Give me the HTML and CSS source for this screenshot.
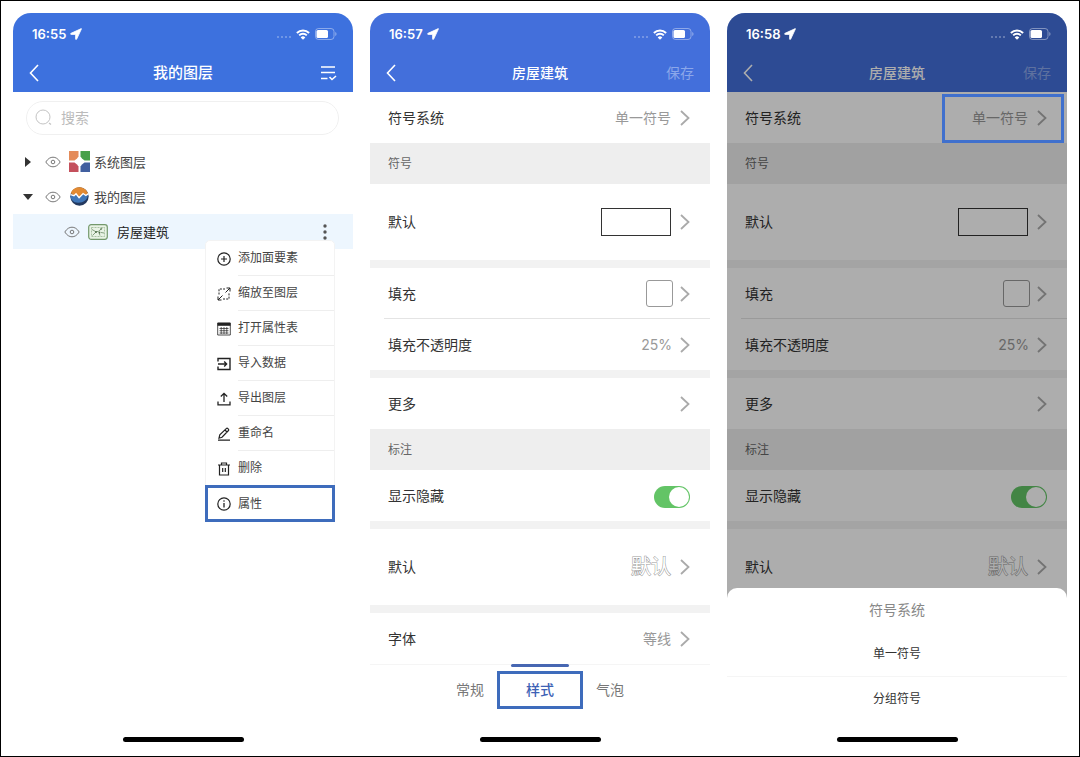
FILE: index.html
```
<!DOCTYPE html>
<html lang="zh-CN">
<head>
    <meta charset="UTF-8">
    <meta name="viewport" content="width=device-width, initial-scale=1.0">
    <title>我的图层</title>
    <link rel="stylesheet" href="styles.css">
</head>
<body>
    <!-- Icons -->
    <svg class="sprite" aria-hidden="true">
        <symbol id="location" viewBox="0 0 12 12"><path d="M11.300.6 1 5.300c-.6.3-.5 1.100.2 1.100h4.400v4.500c0 .7.800.8 1.100.2L11.500.8z" fill="currentColor" stroke="currentColor" stroke-width=".8" stroke-linejoin="round"/></symbol>
        <symbol id="signal" viewBox="0 0 16 4"><g fill="currentColor" opacity=".35"><circle cx="2" cy="2" r="1"/><circle cx="6" cy="2" r="1"/><circle cx="10" cy="2" r="1"/><circle cx="14" cy="2" r="1"/></g></symbol>
        <symbol id="wifi" viewBox="0 0 14 11"><path d="M.9 4a8.700 8.700 0 0 1 12.200 0M3.200 6.400a5.400 5.400 0 0 1 7.600 0" fill="none" stroke="currentColor" stroke-width="2"/><path d="M7 10.800 4.700 8.400a3.300 3.300 0 0 1 4.600 0z" fill="currentColor"/></symbol>
        <symbol id="battery" viewBox="0 0 22 12"><rect x=".5" y=".5" width="18.500" height="11" rx="3" fill="none" stroke="currentColor" opacity=".4"/><rect x="1.500" y="2" width="11.500" height="8" rx="1.500" fill="currentColor"/><path d="M20.300 4v4c1.600-.7 1.600-3.300 0-4z" fill="currentColor" opacity=".45"/></symbol>
        <symbol id="back" viewBox="0 0 10 18"><path d="M9 1 1.500 9 9 17" fill="none" stroke="currentColor" stroke-width="1.600"/></symbol>
        <symbol id="next" viewBox="0 0 10 16"><path d="m1 1 7.500 7L1 15" fill="none" stroke="currentColor" stroke-width="1.800"/></symbol>
        <symbol id="list" viewBox="0 0 17 16"><path d="M1 2h14M1 7.500h14M1 13.500h6.500M9.500 12l2.500 2.500L16 11" fill="none" stroke="currentColor" stroke-width="1.600"/></symbol>
        <symbol id="search" viewBox="0 0 18 18"><circle cx="8" cy="8" r="7" fill="none" stroke="currentColor"/><path d="m14 14 2 1.500" fill="none" stroke="currentColor" stroke-width="1.300"/></symbol>
        <symbol id="eye" viewBox="0 0 16 12"><g fill="none" stroke="currentColor"><path d="M.8 6C3 2.500 5.500 1.200 8 1.200S13 2.500 15.200 6C13 9.500 10.500 10.800 8 10.800S3 9.500.8 6z"/><circle cx="8" cy="6" r="1.800"/></g></symbol>
        <symbol id="system" viewBox="0 0 21 21"><path d="M0 0h9.500v5.500L8 7.500 5.500 9.500H0z" fill="#e48b5a"/><path d="M11.500 0H21v9.500h-5.500L13 7.500l-1.500-2z" fill="#48a04b"/><path d="M0 11.500h5.500L8 13.500l1.500 2V21H0z" fill="#c4505c"/><path d="M15.500 11.500H21V21h-9.500v-5.500l1.500-2z" fill="#415f9f"/></symbol>
        <symbol id="mine" viewBox="0 0 18 18"><circle cx="9" cy="9" r="8.700" fill="#23395f"/><path d="M.3 8.500 4 7l1.700-.8 3 3.800 3.700-3.500L15 8l2-.5c-.3 5-5.500 8.500-12.500 7C2 13 .3 11 .3 8.500z" fill="#3f76b8"/><path d="M.8 6C2.200 2 5.300.3 9 .3s6.700 2.300 8.200 6L15 8l-2.600-1.800-3.800 4L5.700 6.500 3.800 8z" fill="#e28a32"/><path d="m.6 7.300 3.200 1 1.900-1.800 2.900 3.700 3.800-4L15 8l2.500-1.700" fill="none" stroke="#fff" stroke-width="1.300"/></symbol>
        <symbol id="polygon" viewBox="0 0 20 16"><rect x=".7" y=".7" width="18.600" height="14.600" rx="2.500" fill="#e9f3e5" stroke="#74996c" stroke-width="1.200"/><path d="M3.500 3.500h13v9h-13z" fill="none" stroke="#8fae88" stroke-width=".7" stroke-dasharray="2 1"/><path d="m4 5.500 4 2.300 2.500-.5L14.500 4M8 8l-3.500 3.500M11 8.500l1 3M13 8.500l3 .5" fill="none" stroke="#6b8a65" stroke-width=".8"/><g fill="#4c6b47"><circle cx="8" cy="8" r=".9"/><circle cx="11.500" cy="8.500" r=".9"/><circle cx="13" cy="5" r=".8"/></g></symbol>
        <symbol id="more" viewBox="0 0 4 16"><g fill="currentColor"><circle cx="2" cy="2" r="1.700"/><circle cx="2" cy="8" r="1.700"/><circle cx="2" cy="14" r="1.700"/></g></symbol>
        <symbol id="add" viewBox="0 0 14 14"><g fill="none" stroke="currentColor" stroke-width="1.200"><circle cx="7" cy="7" r="6.200"/><path d="M7 4v6M4 7h6"/></g></symbol>
        <symbol id="extent" viewBox="0 0 14 14"><g fill="none" stroke="currentColor"><path d="M1 13 5.500 8.500M8.500 5.500 13 1M9.500 1H13v3.500M1 9.500V13h3.500"/><path d="M2 7.500V2h6M6 12h6V6" stroke-dasharray="2 1.200"/></g></symbol>
        <symbol id="table" viewBox="0 0 14 14"><path d="M.7 1h12.600v12H.7z" fill="none" stroke="currentColor" stroke-width=".8"/><path d="M.5.8h13v3H.5z" fill="currentColor"/><path d="M2.500 6.500h9M2.500 8.700h9M2.500 11h9M4.200 5v7M7 5v7M9.800 5v7" fill="none" stroke="currentColor" stroke-width=".7"/></symbol>
        <symbol id="import" viewBox="0 0 14 14"><path d="M1 4.500V1.500h12v11H1v-3M1 7h8.500M7.200 4.600 9.600 7 7.200 9.400" fill="none" stroke="currentColor" stroke-width="1.400"/></symbol>
        <symbol id="export" viewBox="0 0 14 14"><path d="M1 9.500v3.300h12V9.500M7 10V1.500M3.800 4.500 7 1.300l3.200 3.200" fill="none" stroke="currentColor" stroke-width="1.300"/></symbol>
        <symbol id="rename" viewBox="0 0 14 14"><path d="m2 11.200.8-3.400L9.500 1.400c.8-.7 2.900 1.200 2 2.100L5 10.200zM8 3l2 2M1 13.200h12" fill="none" stroke="currentColor" stroke-width="1.200"/></symbol>
        <symbol id="delete" viewBox="0 0 14 14"><path d="M1 3h12M4.500 3V1h5v2M2.500 3v10h9V3M5.700 6v4M8.300 6v4" fill="none" stroke="currentColor" stroke-width="1.200"/></symbol>
        <symbol id="info" viewBox="0 0 14 14"><circle cx="7" cy="7" r="6.200" fill="none" stroke="currentColor" stroke-width="1.200"/><path d="M7 6v4.500" stroke="currentColor" stroke-width="1.300"/><circle cx="7" cy="4" r=".8" fill="currentColor"/></symbol>
    </svg>

    <div class="screens">
        <!-- Layer list -->
        <section class="phone">
            <header class="header header-list">
                <div class="status">
                    <span class="time">16:55</span>
                    <svg class="icon-location"><use href="#location"/></svg>
                    <svg class="icon-signal"><use href="#signal"/></svg>
                    <svg class="icon-wifi"><use href="#wifi"/></svg>
                    <svg class="icon-battery"><use href="#battery"/></svg>
                </div>
                <div class="nav">
                    <button class="nav-left" aria-label="返回"><svg class="icon-back"><use href="#back"/></svg></button>
                    <h1 class="title title-list">我的图层</h1>
                    <button class="nav-right" aria-label="列表"><svg class="icon-list"><use href="#list"/></svg></button>
                </div>
            </header>

            <div class="search">
                <svg class="icon-search"><use href="#search"/></svg>
                <input type="search" class="search-input" placeholder="搜索" aria-label="搜索">
            </div>

            <ul class="tree">
                <li class="layer">
                    <button class="arrow" aria-label="展开"></button>
                    <button class="visible" aria-label="可见"><svg class="icon-eye"><use href="#eye"/></svg></button>
                    <svg class="icon-group"><use href="#system"/></svg>
                    <span>系统图层</span>
                </li>
                <li class="layer">
                    <button class="arrow open" aria-label="收起"></button>
                    <button class="visible" aria-label="可见"><svg class="icon-eye"><use href="#eye"/></svg></button>
                    <svg class="icon-group icon-mine"><use href="#mine"/></svg>
                    <span>我的图层</span>
                </li>
                <li class="layer layer-child">
                    <button class="visible" aria-label="可见"><svg class="icon-eye"><use href="#eye"/></svg></button>
                    <svg class="icon-polygon"><use href="#polygon"/></svg>
                    <span>房屋建筑</span>
                    <button class="more" aria-label="更多"><svg class="icon-more"><use href="#more"/></svg></button>
                    <div class="menu">
                        <button class="menu-item"><svg class="icon-menu"><use href="#add"/></svg><span>添加面要素</span></button>
                        <button class="menu-item"><svg class="icon-menu"><use href="#extent"/></svg><span>缩放至图层</span></button>
                        <button class="menu-item"><svg class="icon-menu"><use href="#table"/></svg><span>打开属性表</span></button>
                        <button class="menu-item"><svg class="icon-menu"><use href="#import"/></svg><span>导入数据</span></button>
                        <button class="menu-item"><svg class="icon-menu"><use href="#export"/></svg><span>导出图层</span></button>
                        <button class="menu-item"><svg class="icon-menu"><use href="#rename"/></svg><span>重命名</span></button>
                        <button class="menu-item"><svg class="icon-menu"><use href="#delete"/></svg><span>删除</span></button>
                        <button class="menu-item marked"><svg class="icon-menu"><use href="#info"/></svg><span>属性</span></button>
                    </div>
                </li>
            </ul>
            <div class="home"></div>
        </section>

        <!-- Style settings -->
        <section class="phone">
            <header class="header">
                <div class="status">
                    <span class="time">16:57</span>
                    <svg class="icon-location"><use href="#location"/></svg>
                    <svg class="icon-signal"><use href="#signal"/></svg>
                    <svg class="icon-wifi"><use href="#wifi"/></svg>
                    <svg class="icon-battery"><use href="#battery"/></svg>
                </div>
                <div class="nav">
                    <button class="nav-left" aria-label="返回"><svg class="icon-back"><use href="#back"/></svg></button>
                    <h1 class="title">房屋建筑</h1>
                    <button class="nav-right save">保存</button>
                </div>
            </header>

            <button class="row"><span>符号系统</span><span class="value">单一符号</span><svg class="icon-next"><use href="#next"/></svg></button>
            <h2 class="group">符号</h2>
            <button class="row row-tall"><span>默认</span><span class="value symbol"></span><svg class="icon-next"><use href="#next"/></svg></button>
            <div class="band"></div>
            <button class="row row-line"><span>填充</span><span class="value swatch"></span><svg class="icon-next"><use href="#next"/></svg></button>
            <button class="row"><span>填充不透明度</span><span class="value number">25%</span><svg class="icon-next"><use href="#next"/></svg></button>
            <div class="band"></div>
            <button class="row"><span>更多</span><svg class="icon-next"><use href="#next"/></svg></button>
            <h2 class="group">标注</h2>
            <div class="row">
                <label for="show1">显示隐藏</label>
                <input type="checkbox" id="show1" class="switch" checked>
            </div>
            <div class="band"></div>
            <button class="row row-tall"><span>默认</span><span class="value sample">默认</span><svg class="icon-next"><use href="#next"/></svg></button>
            <div class="band"></div>
            <button class="row"><span>字体</span><span class="value">等线</span><svg class="icon-next"><use href="#next"/></svg></button>

            <nav class="tabs">
                <button class="tab">常规</button>
                <button class="tab active">样式</button>
                <button class="tab">气泡</button>
            </nav>
            <div class="home"></div>
        </section>

        <!-- Symbol system picker -->
        <section class="phone">
            <header class="header">
                <div class="status">
                    <span class="time">16:58</span>
                    <svg class="icon-location"><use href="#location"/></svg>
                    <svg class="icon-signal"><use href="#signal"/></svg>
                    <svg class="icon-wifi"><use href="#wifi"/></svg>
                    <svg class="icon-battery"><use href="#battery"/></svg>
                </div>
                <div class="nav">
                    <button class="nav-left" aria-label="返回"><svg class="icon-back"><use href="#back"/></svg></button>
                    <h1 class="title">房屋建筑</h1>
                    <button class="nav-right save">保存</button>
                </div>
            </header>

            <button class="row row-picked"><span>符号系统</span><span class="value">单一符号</span><svg class="icon-next"><use href="#next"/></svg></button>
            <h2 class="group">符号</h2>
            <button class="row row-tall"><span>默认</span><span class="value symbol"></span><svg class="icon-next"><use href="#next"/></svg></button>
            <div class="band"></div>
            <button class="row row-line"><span>填充</span><span class="value swatch"></span><svg class="icon-next"><use href="#next"/></svg></button>
            <button class="row"><span>填充不透明度</span><span class="value number">25%</span><svg class="icon-next"><use href="#next"/></svg></button>
            <div class="band"></div>
            <button class="row"><span>更多</span><svg class="icon-next"><use href="#next"/></svg></button>
            <h2 class="group">标注</h2>
            <div class="row">
                <label for="show2">显示隐藏</label>
                <input type="checkbox" id="show2" class="switch" checked>
            </div>
            <div class="band"></div>
            <button class="row row-tall"><span>默认</span><span class="value sample">默认</span><svg class="icon-next"><use href="#next"/></svg></button>

            <div class="mask"></div>
            <div class="sheet">
                <h2 class="sheet-title">符号系统</h2>
                <button class="option">单一符号</button>
                <button class="option">分组符号</button>
                <div class="home"></div>
            </div>
        </section>
    </div>
</body>
</html>
```
FILE: styles.css
```
*,
*::before,
*::after {
    box-sizing: border-box;
}

body {
    margin: 0;
    min-height: 100vh;
    display: flex;
    border: 1px solid #000;
    background-color: #fff;
    font-family: Inter, "Noto Sans CJK SC", sans-serif;
    font-size: 14px;
    line-height: 20px;
    color: #333;
}

button {
    padding: 0;
    border: none;
    background: none;
    font: inherit;
    color: inherit;
    cursor: pointer;
}

svg {
    display: block;
    flex: none;
}

.sprite {
    position: absolute;
    width: 0;
    height: 0;
}

.screens {
    flex: 1;
    display: grid;
    grid-template-columns: repeat(3, 1fr);
    gap: 17px;
    padding: 12px;
}

.phone {
    position: relative;
    display: flex;
    flex-direction: column;
    border-radius: 18px 18px 0 0;
    overflow: hidden;
}

/* Header */
.header {
    background-color: #436fdb;
    color: #fff;
}

.header-list {
    background-color: #3d71de;
}

.status {
    position: relative;
    z-index: 2;
    display: flex;
    align-items: center;
    height: 42px;
    padding: 0 16px 0 19px;
}

.time {
    font-size: 13px;
    font-weight: 600;
}

.icon-location {
    width: 12px;
    height: 12px;
    margin-left: 4px;
}

.icon-signal {
    width: 16px;
    height: 4px;
    margin: 6px 4px 0 auto;
}

.icon-wifi {
    width: 14px;
    height: 11px;
    margin-right: 5px;
}

.icon-battery {
    width: 22px;
    height: 12px;
}

.nav {
    display: grid;
    grid-template-columns: 1fr auto 1fr;
    align-items: center;
    height: 37px;
    padding: 0 16px 2px;
}

.nav-left {
    justify-self: start;
}

.nav-right {
    justify-self: end;
}

.icon-back {
    width: 10px;
    height: 18px;
}

.icon-list {
    width: 17px;
    height: 16px;
}

.title {
    margin: 0;
    font-size: 14px;
    font-weight: 500;
}

.title-list {
    font-size: 15px;
}

.save {
    color: #8ba7ea;
}

/* Layers */
.search {
    display: flex;
    align-items: center;
    gap: 8px;
    height: 34px;
    margin: 9px 14px 9px 13px;
    padding: 0 8px;
    border: 1px solid #f0f0f0;
    border-radius: 17px;
    color: #c4c4c4;
}

.icon-search {
    width: 18px;
    height: 18px;
}

.search-input {
    flex: 1;
    min-width: 0;
    padding: 0;
    border: none;
    outline: none;
    background: none;
    font: inherit;
}

.search-input::placeholder {
    color: #bbb;
}

.tree {
    margin: 0;
    padding: 0;
    list-style: none;
}

.layer {
    position: relative;
    display: flex;
    align-items: center;
    height: 35px;
    padding-left: 9px;
    font-size: 13px;
    color: #444;
}

.layer-child {
    padding: 0 26px 0 51px;
    background-color: #edf6fe;
    color: #222;
}

.arrow {
    display: flex;
    justify-content: center;
    width: 12px;
    margin-right: 11px;
}

.arrow::before {
    content: "";
    border-left: 6px solid #333;
    border-top: 5px solid transparent;
    border-bottom: 5px solid transparent;
}

.arrow.open::before {
    border-top: 6px solid #333;
    border-left: 5px solid transparent;
    border-right: 5px solid transparent;
    border-bottom: 0;
}

.icon-eye {
    width: 16px;
    height: 12px;
    color: #777;
}

.icon-group {
    width: 21px;
    height: 21px;
    margin: 0 4px 0 8px;
}

.icon-mine {
    padding: 1px;
}

.icon-polygon {
    width: 20px;
    height: 16px;
    margin: 0 9px 0 8px;
}

.more {
    margin-left: auto;
    color: #555;
}

.icon-more {
    width: 4px;
    height: 16px;
}

.menu {
    position: absolute;
    z-index: 1;
    top: 26px;
    right: 18px;
    width: 130px;
    border: 1px solid #f3f3f3;
    border-radius: 5px 5px 0 0;
    background-color: #fff;
}

.menu-item {
    display: flex;
    align-items: center;
    gap: 7px;
    width: 100%;
    height: 35px;
    padding-left: 11px;
    font-size: 12px;
    color: #444;
}

.menu-item span {
    flex: 1;
    line-height: 34px;
    border-bottom: 1px solid #eee;
    text-align: left;
}

.icon-menu {
    width: 14px;
    height: 14px;
    color: #222;
}

.menu-item.marked {
    position: relative;
    width: 130px;
    height: 37px;
    margin: -1px;
    padding-left: 9px;
    border: 3px solid #3e6cbc;
}

.menu-item.marked span {
    line-height: 30px;
    border: none;
}

/* Settings */
.row {
    display: flex;
    align-items: center;
    height: 51px;
    padding: 0 20px 0 18px;
    text-align: left;
}

.row-tall {
    height: 76px;
}

.row-line {
    background: linear-gradient(#e4e4e4, #e4e4e4) 14px 100% / 100% 1px no-repeat;
}

.value {
    margin-left: auto;
    margin-right: 9px;
    color: #999;
}

.number {
    margin-right: 8px;
}

.symbol {
    width: 70px;
    height: 28px;
    border: 1px solid #333;
}

.swatch {
    width: 27px;
    height: 27px;
    margin-right: 7px;
    border: 1px solid #999;
    border-radius: 3px;
}

.sample {
    font-size: 20px;
    color: #fff;
    -webkit-text-stroke: 1px #999;
    paint-order: stroke fill;
}

.icon-next {
    width: 10px;
    height: 16px;
    color: #aaa;
}

.row > span:first-child + .icon-next {
    margin-left: auto;
}

.group {
    margin: 0;
    padding: 0 18px;
    font-size: 12px;
    font-weight: 400;
    line-height: 41px;
    background-color: #eee;
    color: #666;
}

.band {
    height: 8px;
    background-color: #f2f2f2;
}

.switch {
    appearance: none;
    width: 36px;
    height: 22px;
    margin: 2px 0 0 auto;
    padding: 1px;
    border-radius: 11px;
    background-color: #ccc;
}

.switch::before {
    content: "";
    display: block;
    width: 20px;
    height: 20px;
    border-radius: 50%;
    background-color: #fff;
}

.switch:checked {
    background-color: #63c466;
}

.switch:checked::before {
    margin-left: auto;
}

.tabs {
    display: flex;
    justify-content: center;
    border-top: 1px solid #f5f5f5;
    padding-bottom: 28px;
}

.tab {
    width: 54px;
    margin-top: 6px;
    height: 38px;
    color: #777;
}

.tab.active {
    position: relative;
    width: 86px;
    border: 3px solid #3e6cbc;
    font-weight: 500;
    color: #3e62b5;
}

.tab.active::before {
    content: "";
    position: absolute;
    top: -10px;
    left: 11px;
    right: 11px;
    height: 3px;
    border-radius: 2px;
    background-color: #4767b2;
}

.home {
    align-self: center;
    width: 121px;
    height: 5px;
    margin-top: auto;
    margin-bottom: 2px;
    border-radius: 3px;
    background-color: #000;
}

/* Bottom sheet */
.mask {
    position: absolute;
    inset: 0;
    background-color: rgba(0, 0, 0, 0.32);
}

.row-picked {
    position: relative;
}

.row-picked::after {
    content: "";
    position: absolute;
    z-index: 1;
    top: 2px;
    right: 3px;
    width: 122px;
    height: 49px;
    border: 3px solid #4070cd;
}

.sheet {
    position: absolute;
    left: 0;
    right: 0;
    bottom: 0;
    display: flex;
    flex-direction: column;
    border-radius: 10px 10px 0 0;
    background-color: #fff;
}

.sheet-title {
    margin: 0;
    font-size: 14px;
    font-weight: 400;
    line-height: 44px;
    text-align: center;
    color: #888;
}

.option {
    height: 44px;
    font-size: 12px;
}

.option + .option {
    border-top: 1px solid #f5f5f5;
}

.sheet .home {
    margin-top: 17px;
}
```
